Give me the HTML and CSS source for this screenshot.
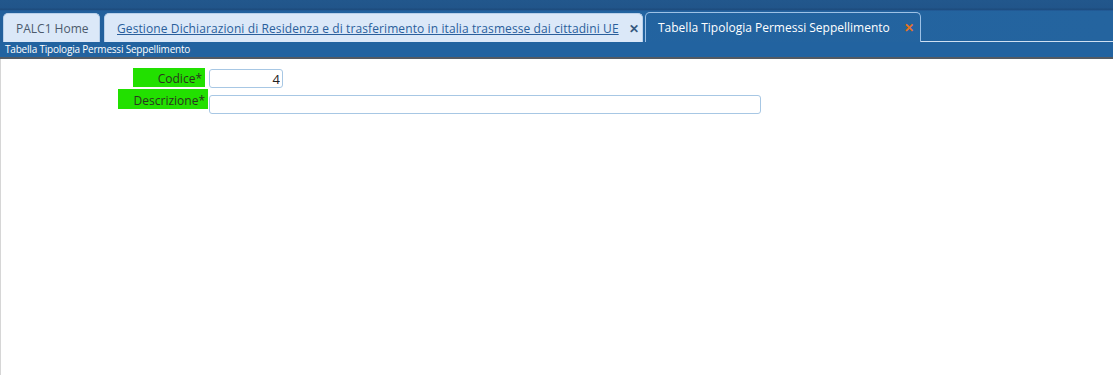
FILE: index.html
```html
<!DOCTYPE html>
<html lang="en">
<head>
    <meta charset="UTF-8">
    <meta name="viewport" content="width=device-width, initial-scale=1.0">
    <title>Tabella Tipologia Permessi Seppellimento</title>
    <link rel="stylesheet" href="styles.css">
</head>
<body>
    <div class="header">
        <div class="top-band"></div>
        <div class="tabs">
            <div class="tab tab-home">PALC1 Home</div>
            <div class="tab tab-link">
                <a href="#">Gestione Dichiarazioni di Residenza e di trasferimento in italia trasmesse dai cittadini UE</a>
                <span class="close">&#x2715;</span>
            </div>
            <div class="tab active">
                <span>Tabella Tipologia Permessi Seppellimento</span>
                <span class="close">&#x2715;</span>
            </div>
            <div class="tab-fill"></div>
        </div>
        <div class="title-bar">Tabella Tipologia Permessi Seppellimento</div>
    </div>
    <div class="content">
        <form class="form">
            <div class="row row-codice">
                <label class="field-label" for="codice">Codice*</label>
                <input class="field-input input-short" type="text" id="codice" value="4">
            </div>
            <div class="row row-descr">
                <label class="field-label" for="descrizione">Descrizione*</label>
                <input class="field-input input-long" type="text" id="descrizione">
            </div>
        </form>
    </div>
</body>
</html>
```

FILE: styles.css
```css
body {
    margin: 0;
    font-family: "Open Sans", Arial, sans-serif;
    background-color: #ffffff;
    height: 375px;
    display: flex;
    flex-direction: column;
    overflow: hidden;
}
.header {
    background: linear-gradient(90deg, #23609c 0%, #2263a0 50%, #24649f 100%);
}
.top-band {
    height: 11px;
    background: linear-gradient(180deg, #22578c 0%, #21558a 70%, #1d4b7c 85%, #2360a0 100%);
}
.tabs {
    display: flex;
    align-items: flex-end;
    height: 31px;
    padding-left: 3px;
}
.tab {
    flex-shrink: 0;
    height: 29px;
    box-sizing: border-box;
    display: flex;
    align-items: center;
    padding: 0 12px;
    margin-right: 4px;
    background-color: #dbe8f8;
    border: 1px solid #b9d0ea;
    border-bottom: none;
    border-radius: 5px 5px 0 0;
    color: #4c5a6c;
    font-size: 12px;
    white-space: nowrap;
    overflow: hidden;
}
.tab-home {
    width: 97px;
}
.tab-link {
    width: 539px;
    margin-right: 2px;
    justify-content: space-between;
    padding-right: 8px;
}
.tab-link a {
    color: #2a5f9c;
    text-decoration: underline;
    letter-spacing: 0.1px;
}
.tab .close {
    font-size: 12px;
    font-weight: bold;
    color: #35597f;
    margin-left: 10px;
}
.tab.active {
    width: 276px;
    margin-right: 0;
    justify-content: space-between;
    padding-right: 6px;
    background-color: transparent;
    border: 1px solid #9dc1e6;
    border-bottom: none;
    color: #ffffff;
    height: 30px;
}
.tab.active .close {
    color: #e8721f;
}
.tab-fill {
    flex: 1;
    height: 0;
    border-bottom: 1px solid #cfe0f2;
}
.title-bar {
    height: 15px;
    line-height: 15px;
    padding-left: 5px;
    color: #ffffff;
    font-size: 10px;
    letter-spacing: -0.2px;
    background-color: #2263a0;
    border-bottom: 2px solid #545b63;
}
.content {
    flex: 1;
    border-left: 1px solid #d6d6d6;
}
.form {
    padding-top: 9px;
    display: flex;
    flex-direction: column;
    gap: 1px;
}
.row {
    display: grid;
    grid-template-columns: 207px auto;
    column-gap: 1px;
}
.field-label {
    justify-self: end;
    background-color: #22e000;
    color: #2a331f;
    font-size: 12px;
    text-align: right;
    padding-right: 3px;
    box-sizing: border-box;
    height: 19px;
    line-height: 21px;
}
.row-codice .field-label {
    width: 72px;
    margin-right: 3px;
}
.row-descr .field-label {
    width: 90px;
    height: 20px;
    line-height: 24px;
}
.field-input {
    box-sizing: border-box;
    height: 19px;
    border: 1px solid #a7c7e4;
    border-radius: 3px;
    padding: 0 2px;
    font-family: "Open Sans", Arial, sans-serif;
    font-size: 13px;
    color: #222;
}
.input-short {
    width: 74px;
    margin-top: 1px;
    text-align: right;
}
.input-long {
    width: 552px;
    margin-top: 6px;
}
```
